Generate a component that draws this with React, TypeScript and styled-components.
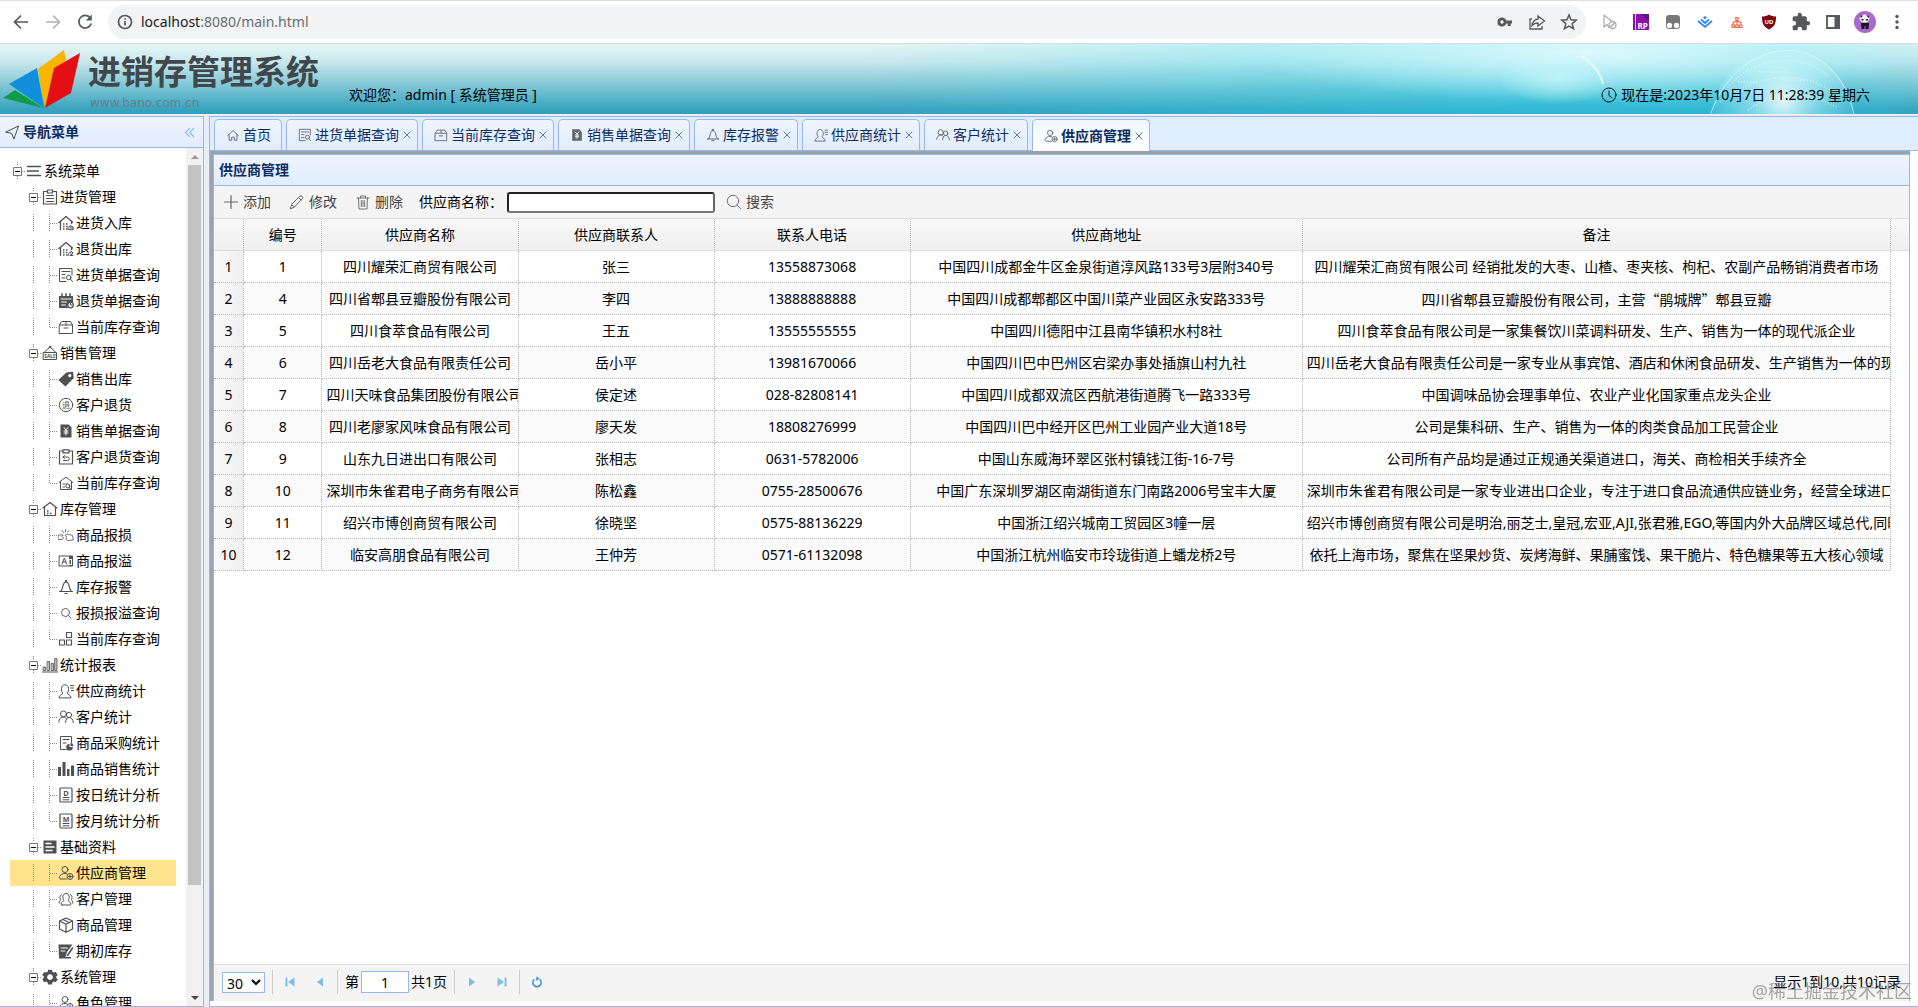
import React from 'react';
import styled, { createGlobalStyle, css } from 'styled-components';

const BLUE = '#95b8e7';
const INK = '#0e2d5f';
const FONT = '"Noto Sans", "Noto Sans CJK SC", sans-serif';

const GlobalStyle = createGlobalStyle`
  *, *::before, *::after { box-sizing: border-box; }
  body { margin: 0; background: #fff; color: #000; font: 14px/20px ${FONT}; overflow: hidden; }
  button, input, select { font: inherit; color: inherit; margin: 0; }
  button { border: 0; padding: 0; background: none; cursor: pointer; }
  svg { display: block; flex: none; }
`;

/* ---------- icons ---------- */

const Glyph = styled.svg.attrs({ viewBox: '0 0 16 16' })<{ $size?: number }>`
  width: ${(p) => p.$size ?? 16}px;
  height: ${(p) => p.$size ?? 16}px;
  fill: none;
  stroke: currentColor;
  stroke-width: 1;
  stroke-linecap: round;
  stroke-linejoin: round;
`;

const solid = { fill: 'currentColor', stroke: 'none' };
const mini = { fill: 'currentColor', stroke: 'none', fontFamily: 'Noto Sans', fontWeight: 700, textAnchor: 'middle' as const };

const icons: Record<string, React.ReactNode> = {
  menu: <path strokeWidth="1.3" d="M1.5 3.5h13M1.5 8h11M1.5 12.5h13" />,
  clipboard: (
    <>
      <path strokeWidth="1.2" d="M4.5 2.5h-3v12.500h13V2.500h-3M5.500 1h5v3h-5z" />
      <path d="M4.500 6.500h7M4.500 9.500h7M4.500 12.500h7" />
    </>
  ),
  houseIn: (
    <>
      <path strokeWidth="1.3" d="M1 7.500 8 1.500l6.500 5.500M2.500 6.500v8M13.500 6.500v2" />
      <path strokeWidth="1.6" strokeDasharray="1.500 1.500" strokeLinecap="butt" d="M5 9h6M5 11.500h4.500M5 14h4.500" />
      <path d="M10 14v-1.500l2-2 3 1.500v2.500zM12 11.500v1.500h3" />
    </>
  ),
  houseOut: (
    <>
      <path strokeWidth="1.3" d="M1 7.500 8 1.500l6.500 5.500M2.500 6.500v8M13.500 6.500v2" />
      <path strokeWidth="1.6" strokeDasharray="1.500 1.500" strokeLinecap="butt" d="M5 9h4.500M5 11.500h4.500M5 14h4.500" />
      <path d="M10 14.500c0-2 1-3 3-3v-1.500l2 2-2 2v-1M12 14.500h3" />
    </>
  ),
  docSearch: (
    <>
      <path d="M14 8V1.500H1.500v13H8M4 4.500h8M4 7.500h3M4 11h3" />
      <circle cx="10.800" cy="10.500" r="2.300" />
      <path d="m12.500 12.300 2 2.200" />
    </>
  ),
  calendar: (
    <>
      <path {...solid} d="M1 3h14v6.500a4 4 0 0 0-5 5.500H1z" />
      <path strokeWidth="1.500" d="M4 .800v3M8 .800v3M12 .800v3" />
      <path stroke="#fff" d="M3 6h10M3.500 9h5M3.500 12h4" />
      <circle cx="12.500" cy="12" r="2.800" strokeWidth="1.300" />
      <path d="M12.500 10.500V12h1.300" />
    </>
  ),
  box: (
    <>
      <path d="M1.500 6 3.500 2.500h9L14.500 6v8.500h-13zM1.500 6h13M8 2.500V6M6 9h4" />
    </>
  ),
  sale: (
    <>
      <path d="M1.500 7.500h13v7h-13zM2 7.500 8 2l6 5.500" />
      <circle cx="8" cy="2" r=".9" />
      <text {...mini} x="8" y="13" fontSize="4.800">SALE</text>
    </>
  ),
  tag: <path {...solid} fillRule="evenodd" d="M8.500 1.500 15 .800l.800 6.200L7.500 15.500.300 9zM11.800 3a1.600 1.600 0 1 0 .010 0z" />,
  returned: (
    <>
      <circle cx="8" cy="8" r="6.700" />
      <text {...mini} x="8" y="11" fontSize="8" fontFamily="Noto Sans CJK SC" fontWeight={400}>退</text>
    </>
  ),
  bill: (
    <>
      <path {...solid} d="M2.500 1.500h8l3 3v10h-11z" />
      <path stroke="#fff" d="m6 4.500 2 2.500 2-2.500M8 7v5M6 8h4M6 10h4" />
    </>
  ),
  clipReturn: (
    <>
      <path strokeWidth="1.200" d="M4.500 2h-3v13h13V2h-3M5 .800h6v3H5z" />
      <path d="M6.500 6.500 5 8l1.500 1.500M5 8h4.500a1.700 1.700 0 0 1 0 3.500H5.500" />
    </>
  ),
  houseStock: (
    <>
      <path d="M1 7.500 8 2l7 5.500M2.500 6.500v8h11v-8M5 9h1.500M5 12h1.500M8 9h1" />
      <circle cx="9.800" cy="11" r="2" />
      <path d="m11.200 12.500 1.300 1.500" />
    </>
  ),
  warehouse: (
    <>
      <path strokeWidth="1.200" d="M1 7 8 1.500 15 7M2.500 6v8.500h11V6" />
      <path strokeWidth="1.500" strokeDasharray="1.500 1.500" strokeLinecap="butt" d="M5 10h3M5 12.500h6" />
    </>
  ),
  broken: <path strokeWidth=".8" d="M.500 8h4.500l-1 1.500 1.500 1.500-1 1.500H.500zM7.500 8l2-1 5 1.500.800 4.500-6 .500-1.300-1.500.500-1.500zM4 3.500l1.500 2M7.500 2.500v2.500M11 3.500 9.500 5" />,
  letterBox: (
    <>
      <path d="M1.500 3h13v10h-13z" />
      <path {...solid} d="M11 3h3.500v3H11zM11.500 7H13v4h-1.500zM11 12h3.500v1H11z" />
      <path d="m4 11 2.300-6 2.300 6M5 9h2.800" />
    </>
  ),
  bell: <path strokeWidth="1.100" d="M1.500 12.500h13M2.500 12.500C4.500 11 4.500 8.500 5 6.500 5.500 4.500 6.500 3 8 3s2.500 1.500 3 3.500c.5 2 .5 4.500 2.500 6M7.500 1.500h1V3h-1zM6.800 14.500h2.400" />,
  zoom: (
    <>
      <circle cx="7.500" cy="7.500" r="4" strokeWidth=".9" />
      <path strokeWidth=".9" d="m10.500 10.500 2.500 2.500" />
    </>
  ),
  blocks: <path strokeWidth="1.100" d="M8.500 1.500h5v5h-5zM1.500 9h5v5h-5zM8.500 9h5v5h-5z" />,
  report: (
    <>
      <path strokeWidth="1.200" d="M.500 15h15" />
      <path strokeWidth=".8" d="M1.500 10h2v3.500h-2zM5.500 4.500h2v9h-2zM9.500 6.500h2v7h-2zM13 1.500h2v12h-2z" fill="#bbb" />
    </>
  ),
  supplier: <path d="M1 14.500c0-3 3.500-2.500 3.800-4.500C3.500 9 3.500 7.500 3.500 5.500c0-5 7-5 7 0 0 2 0 3.500-1.200 4.500.2 2 3.700 1.500 3.700 4.500zM12.500 2.500h3M12.500 5h3M13.500 7.500h2" />,
  people: (
    <>
      <circle cx="5.500" cy="5" r="3" />
      <circle cx="11" cy="6" r="2.600" />
      <path d="M.800 13c.2-3 2-5 4.700-5 1.500 0 2.500.8 3 2M7.500 13.500c.2-3 1.500-5 3.800-5s3.700 2 4 5" />
    </>
  ),
  docPie: (
    <>
      <path d="M13.500 7.500V1.500h-11v13H8M5 4.500h6M5 8h3" />
      <path {...solid} d="M11.500 9v3h3.300a3.300 3.300 0 1 1-3.300-3zM12.500 8a3 3 0 0 1 2.800 3h-2.800z" />
    </>
  ),
  bars: <path {...solid} d="M0 6h3v9H0zM4.500 1h3v14h-3zM9 8h2.500v7H9zM13 4.500h3V15h-3z" />,
  dayDoc: (
    <>
      <rect x="2" y="1" width="12" height="14" rx="1" strokeWidth="1.200" />
      <path d="M5 10.500h6M5 12.800h6" />
      <text {...mini} x="8" y="8.500" fontSize="7.500">D</text>
    </>
  ),
  monthDoc: (
    <>
      <rect x="2" y="1" width="12" height="14" rx="1" strokeWidth="1.200" />
      <path d="M5 10.500h6M5 12.800h6" />
      <text {...mini} x="8" y="8.500" fontSize="7">M</text>
    </>
  ),
  data: (
    <>
      <path {...solid} d="M1.500 1.500h13v13h-13z" />
      <path stroke="#fff" strokeWidth="1.500" d="M4 4.500h5M4 8h8M4 11.500h6" />
    </>
  ),
  userPin: (
    <>
      <circle cx="7" cy="4.500" r="3" />
      <path d="M8.500 14H3c-2 0-2-1.500-1.500-2.500C2.500 9.500 4.500 8.500 7 8.500c.8 0 1.500.1 2 .4" />
      <circle cx="12" cy="11.500" r="3" />
      <path d="M10.500 11.500h3M12 10v3" />
    </>
  ),
  group: (
    <>
      <path d="M4 14h8c1.500 0 1-3-2-4.500 2-2.500 1.500-7-2-7S4 7 6 9.500C3 11 2.500 14 4 14zM3.700 3.500C1.500 4 1.500 7.500 2.800 8.800 1 10 .500 12 1.500 12.500M12.300 3.500c2.200.5 2.200 4 .9 5.300 1.800 1.200 2.300 3.200 1.300 3.700" />
    </>
  ),
  cube: <path strokeWidth="1.200" d="M8 1 14.500 4v8L8 15.200 1.500 12V4zM1.500 4 8 7.200 14.500 4M8 7.200v8M5 2.500 11 5.500" />,
  note: (
    <>
      <path {...solid} d="M.500 1.500h14L9 9l-1.500 5H13v1.500H1z" />
      <path stroke="#fff" d="M3 5h6.500M3 8h4" />
      <path strokeWidth="1.600" d="m14.500 5-5 7.500" />
    </>
  ),
  gear: (
    <path {...solid} fillRule="evenodd" d="M6.200.800h3.600l.6 2 1.400.8 2-.6 1.900 3-1.500 1.400v1.400l1.500 1.400-1.900 3-2-.6-1.400.8-.6 2H6.200l-.6-2-1.400-.8-2 .6-1.900-3 1.500-1.400V7.400L.300 6l1.900-3 2 .6 1.400-.8zM8 5.200a2.900 2.900 0 1 0 .010 0z" />
  ),
  home: <path d="M2 8.500 8 3l6 5.500M3.500 7.500v6.500h3v-3.500h3V14h3V7.500" />,
  send: <path d="M1 7.500 14.500 1 9.500 15 7.200 9.200z" />,
  clock: (
    <>
      <circle cx="8" cy="8" r="7" strokeWidth=".9" />
      <path strokeWidth=".9" d="M8 4v4.500l2.500 2" />
    </>
  ),
  plus: <path strokeWidth="1.200" d="M8 1.500v13M1.500 8h13" />,
  pencil: <path d="m1.500 14.500 1-4 8.500-8.500c1.200-1 3.500 1.200 2.500 2.500L5.500 13zM9.500 3.500 12 6M2.500 10.500l3 2.500" />,
  trash: <path strokeWidth=".9" d="M2 4h12M5.500 4V2h5v2M3.500 4l.5 11h8l.5-11M6.300 6.500v6M8 6.500v6M9.700 6.500v6" />,
  search: (
    <>
      <circle cx="7" cy="7" r="5.700" strokeWidth=".9" />
      <path strokeWidth=".9" d="m11.200 11.200 3.500 3.500" />
    </>
  ),
  first: <path {...solid} d="M2 2h2.500v12H2zM14 2v12L5.500 8z" />,
  prev: <path {...solid} d="M12 2v12L4 8z" />,
  next: <path {...solid} d="M4 2v12l8-6z" />,
  last: <path {...solid} d="M11.500 2H14v12h-2.500zM2 2v12l8.500-6z" />,
  refresh: (
    <>
      <path strokeWidth="2" strokeLinecap="butt" d="M11.500 4.500A5.500 5.500 0 1 1 4.500 4.500" />
      <path {...solid} d="M7 .500v6L11.500 3.300z" />
    </>
  ),
  collapse: <path strokeWidth="1.500" d="M8 2 2 8l6 6M14 2 8 8l6 6" />,
};

const Icon = ({ name, size }: { name: string; size?: number }) => (
  <Glyph $size={size} aria-hidden="true">{icons[name]}</Glyph>
);

/* ---------- browser bar ---------- */

const Page = styled.div`
  height: 100vh;
  display: grid;
  grid-template-rows: 44px 70px minmax(0, 1fr);
`;

const BrowserBar = styled.div`
  display: flex;
  align-items: center;
  padding: 0 5px;
  border-top: 1px solid #dcdee0;
  border-bottom: 1px solid #d5dcdf;
  color: #55585c;
`;

const ChromeButton = styled.button<{ $dim?: boolean }>`
  width: 32px;
  height: 32px;
  display: grid;
  place-items: center;
  opacity: ${(p) => (p.$dim ? 0.45 : 1)};
`;

const Address = styled.div`
  flex: 1;
  height: 34px;
  margin: 0 7px;
  padding: 0 1px 0 7px;
  display: flex;
  align-items: center;
  border-radius: 17px;
  background: #f1f3f4;
`;

const Url = styled.span`
  flex: 1;
  padding-left: 6px;
  font-size: 14px;
  color: #6a6d70;
  b { font-weight: 400; color: #202124; }
`;

const ChromeSvg = styled.svg`
  width: 20px;
  height: 20px;
  fill: none;
  stroke: currentColor;
  stroke-width: 1.7;
`;

const Avatar = styled.svg`
  width: 22px;
  height: 22px;
`;

function Browser() {
  return (
    <BrowserBar>
      <ChromeButton aria-label="back"><ChromeSvg viewBox="0 0 20 20"><path d="M17 10H4M10 3.500 3.500 10l6.500 6.500" /></ChromeSvg></ChromeButton>
      <ChromeButton aria-label="forward" $dim><ChromeSvg viewBox="0 0 20 20"><path d="M3 10h13M10 3.500l6.500 6.500-6.500 6.500" /></ChromeSvg></ChromeButton>
      <ChromeButton aria-label="reload">
        <ChromeSvg viewBox="0 0 20 20"><path d="M15.300 6A6.300 6.300 0 1 0 16.200 11.500" /><path d="M16.800 2.500v6h-6z" fill="currentColor" stroke="none" /></ChromeSvg>
      </ChromeButton>
      <Address>
        <ChromeSvg viewBox="0 0 20 20"><circle cx="10" cy="10" r="6.500" /><path d="M10 9v4.500M10 6.200v1.600" /></ChromeSvg>
        <Url><b>localhost</b>:8080/main.html</Url>
        <ChromeButton aria-label="passwords">
          <ChromeSvg viewBox="0 0 20 20"><path fill="currentColor" stroke="none" fillRule="evenodd" d="M7 5.500a4.500 4.500 0 0 1 4.200 3H17v3h-1.300V14h-3v-2.500h-1.500A4.500 4.500 0 1 1 7 5.500zM7 8.300a1.700 1.700 0 1 0 .010 0z" /></ChromeSvg>
        </ChromeButton>
        <ChromeButton aria-label="share">
          <ChromeSvg viewBox="0 0 20 20"><path strokeWidth="1.300" d="M5 7H3v10h12v-3M11 4l6.500 5-6.500 5v-3c-3 0-4.500.8-6 2.500.5-3.500 2.500-6 6-6.500z" /></ChromeSvg>
        </ChromeButton>
        <ChromeButton aria-label="bookmark">
          <ChromeSvg viewBox="0 0 20 20"><path strokeWidth="1.500" d="m10 3 2 4.800 5.200.4-4 3.400 1.300 5.100L10 14l-4.500 2.700 1.300-5.100-4-3.400L8 7.800z" /></ChromeSvg>
        </ChromeButton>
      </Address>
      <ChromeButton aria-label="pointer">
        <ChromeSvg viewBox="0 0 20 20"><path stroke="#a9a9a9" strokeWidth="1.200" d="M5 3v12l3-2.500 2 3.500M5 3l7.500 6" /><circle cx="13.500" cy="13" r="3.500" stroke="#a9a9a9" strokeWidth="1.300" /><path stroke="#a9a9a9" d="m11.500 15 4-4" /></ChromeSvg>
      </ChromeButton>
      <ChromeButton aria-label="RP">
        <ChromeSvg viewBox="0 0 20 20"><path fill="#8a12a8" stroke="none" d="M2 2h16v16H2z" /><path fill="#5b1583" stroke="none" d="M10 2h8v7z" /><path stroke="#fff" strokeWidth=".8" d="M4.500 2v16" /><text x="11.500" y="16.500" fontSize="8" fontWeight="700" fill="#fff" stroke="none" textAnchor="middle" fontFamily="Noto Sans">RP</text></ChromeSvg>
      </ChromeButton>
      <ChromeButton aria-label="panda">
        <ChromeSvg viewBox="0 0 20 20"><rect x="3" y="3" width="14" height="14" rx="3" fill="#777" stroke="none" /><circle cx="6.500" cy="13.500" r="2.700" fill="#fff" stroke="none" /><circle cx="13.500" cy="13.500" r="2.700" fill="#fff" stroke="none" /></ChromeSvg>
      </ChromeButton>
      <ChromeButton aria-label="juejin">
        <ChromeSvg viewBox="0 0 20 20"><path stroke="#2a83f6" d="m3 9 7 6 7-6M6 7.500l4 3.500 4-3.500" /><path fill="#2a83f6" stroke="none" d="m10 4 2 1.700-2 1.600-2-1.600z" /></ChromeSvg>
      </ChromeButton>
      <ChromeButton aria-label="sitemap">
        <ChromeSvg viewBox="0 0 20 20"><path stroke="#ee6a4a" strokeWidth="1.200" d="M8.800 5.500h2.400V8H8.800zM10 8v5M6 13v-2.500l4-1.500 4 1.500V13M5 13h2.500v2.500H5zM8.800 13h2.400v2.500H8.800zM12.500 13H15v2.500h-2.500z" /></ChromeSvg>
      </ChromeButton>
      <ChromeButton aria-label="ublock">
        <ChromeSvg viewBox="0 0 20 20"><path fill="#800010" stroke="none" d="M10 2.500c2 1.500 4.500 2 7 2 0 6-1 10-7 13-6-3-7-7-7-13 2.500 0 5-.5 7-2z" /><text x="10" y="12" fontSize="6" fontWeight="700" fill="#fff" stroke="none" textAnchor="middle" fontFamily="Noto Sans">UD</text></ChromeSvg>
      </ChromeButton>
      <ChromeButton aria-label="extensions">
        <ChromeSvg viewBox="0 0 24 24"><path fill="currentColor" stroke="none" d="M20.500 11H19V7c0-1.100-.9-2-2-2h-4V3.500a2.500 2.500 0 0 0-5 0V5H4c-1.100 0-2 .9-2 2v3.800h1.500a2.700 2.700 0 0 1 0 5.400H2V20c0 1.100.9 2 2 2h3.800v-1.500a2.700 2.700 0 0 1 5.400 0V22H17c1.100 0 2-.9 2-2v-4h1.500a2.500 2.500 0 0 0 0-5z" /></ChromeSvg>
      </ChromeButton>
      <ChromeButton aria-label="side panel">
        <ChromeSvg viewBox="0 0 20 20"><path strokeWidth="1.800" d="M4 4h12v12H4z" /><path fill="currentColor" stroke="none" d="M11.500 4H17v13h-5.500z" /></ChromeSvg>
      </ChromeButton>
      <ChromeButton aria-label="profile">
        <Avatar viewBox="0 0 22 22"><circle cx="11" cy="11" r="11" fill="#ab68cf" /><ellipse cx="10.500" cy="7.500" rx="5" ry="4" fill="#f4f0f6" /><path fill="#1c1820" d="M6 4.500h3L7 7zM12 4l3 1-.5 2zM7.500 8h2v1.500h-2zM12 8h2v1.500h-2zM7 12h8l-.5 6h-3v-3h-1v3H7.500z" /></Avatar>
      </ChromeButton>
      <ChromeButton aria-label="more">
        <ChromeSvg viewBox="0 0 20 20"><g fill="currentColor" stroke="none"><circle cx="10" cy="4.500" r="1.700" /><circle cx="10" cy="10" r="1.700" /><circle cx="10" cy="15.500" r="1.700" /></g></ChromeSvg>
      </ChromeButton>
    </BrowserBar>
  );
}

/* ---------- banner ---------- */

const Banner = styled.header`
  position: relative;
  display: flex;
  align-items: flex-start;
  overflow: hidden;
  background:
    radial-gradient(ellipse 340px 50px at calc(100% - 330px) 8px, rgba(240, 253, 255, 0.8), transparent),
    linear-gradient(90deg, transparent 45%, rgba(40, 220, 245, 0.4) 80%, rgba(40, 220, 245, 0.35) 93%, rgba(40, 200, 225, 0.1)),
    linear-gradient(#e6f5f6 0, #c9e8ec 25%, #7fc6d4 60%, #3ba5c0 92%, #349fbb);
`;

const GlobeArt = styled.svg`
  position: absolute;
  right: 0;
  top: 0;
  width: 480px;
  height: 70px;
`;

const Logo = styled.svg`
  width: 88px;
  height: 70px;
`;

const Brand = styled.div`
  padding-top: 6px;
  width: 261px;
`;

const BrandName = styled.h1`
  margin: 0 0 4px;
  font: 700 33px/40px "Noto Sans CJK SC", sans-serif;
  color: #40484d;
  white-space: nowrap;
`;

const BrandSite = styled.div`
  padding-left: 2px;
  font: 12px/18px "DejaVu Sans", sans-serif;
  color: #667f88;
`;

const Welcome = styled.div`
  flex: 1;
  padding-top: 41px;
`;

const Clock = styled.div`
  position: relative;
  display: flex;
  align-items: center;
  gap: 4px;
  padding: 41px 48px 0 0;
`;

/* ---------- work area ---------- */

const Workspace = styled.div`
  display: grid;
  grid-template-columns: 204px minmax(0, 1fr);
  column-gap: 5px;
  padding-top: 2px;
  background: #e6eef8;
  min-height: 0;
`;

const Sidebar = styled.nav`
  display: grid;
  grid-template-rows: 31px minmax(0, 1fr);
  border: 1px solid ${BLUE};
  border-left: 0;
  background: #fff;
  min-height: 0;
`;

const titleBar = css`
  display: flex;
  align-items: center;
  border-bottom: 1px solid ${BLUE};
  background: linear-gradient(#eff5ff, #e0ecff);
  color: ${INK};
  font-size: 14px;
  font-weight: 700;
`;

const NavTitle = styled.div`
  ${titleBar}
  padding: 0 8px 0 5px;
  gap: 3px;
  svg { color: #444; }
`;

const NavLabel = styled.span`
  flex: 1;
`;

const Fold = styled.button`
  svg { color: #6cb2ee; }
`;

const NavBody = styled.div`
  display: grid;
  grid-template-columns: minmax(0, 1fr) 17px;
  min-height: 0;
`;

const Tree = styled.ul`
  list-style: none;
  margin: 0;
  padding: 10px;
  overflow: hidden;
`;

const TreeRow = styled.li<{ $active: boolean }>`
  display: flex;
  align-items: center;
  height: 26px;
  white-space: nowrap;
  background: ${(p) => (p.$active ? '#ffe48d' : 'transparent')};
  svg { color: #505050; }
`;

const TreeLink = styled.a`
  display: flex;
  align-items: center;
  gap: 2px;
  color: #000;
  text-decoration: none;
`;

const dotsY = 'repeating-linear-gradient(#8a8a8a 0 1px, transparent 1px 2px)';
const dotsX = 'repeating-linear-gradient(90deg, #8a8a8a 0 1px, transparent 1px 2px)';

const Blank = styled.span`
  flex: none;
  width: 16px;
  height: 18px;
`;

const Rail = styled(Blank)`
  background: ${dotsY} 7px 0 / 1px 18px no-repeat;
`;

const Join = styled(Blank)<{ $last: boolean }>`
  background:
    ${dotsY} 7px 0 / 1px ${(p) => (p.$last ? 9 : 18)}px no-repeat,
    ${dotsX} 8px 9px / 8px 1px no-repeat;
`;

const Toggle = styled.button`
  flex: none;
  width: 16px;
  height: 18px;
  display: grid;
  place-items: center;
  background:
    ${dotsY} 7px 0 / 1px 4px no-repeat,
    ${dotsY} 7px 14px / 1px 4px no-repeat,
    ${dotsX} 12px 9px / 4px 1px no-repeat;
`;

const Minus = styled.svg`
  width: 9px;
  height: 9px;
  margin-right: 1px;
`;

const Track = styled.div`
  display: grid;
  grid-template-rows: 17px 90fr 13fr 17px;
  justify-items: center;
  align-items: center;
  background: #f1f1f1;
`;

const Thumb = styled.div`
  width: 13px;
  align-self: stretch;
  grid-row: 2;
  background: #c1c3c1;
`;

const Arrow = styled.svg`
  width: 8px;
  height: 4px;
  &:last-child { grid-row: 4; }
`;

const Main = styled.main`
  display: grid;
  grid-template-rows: 34px minmax(0, 1fr);
  border: 1px solid ${BLUE};
  border-right: 0;
  background: #fff;
  min-height: 0;
`;

const TabStrip = styled.ul`
  list-style: none;
  margin: 0;
  padding: 2px 4px 0;
  display: flex;
  gap: 4px;
  background: #e0ecff;
  border-bottom: 1px solid ${BLUE};
`;

const Tab = styled.li<{ $active: boolean }>`
  display: flex;
  align-items: center;
  height: ${(p) => (p.$active ? 32 : 31)}px;
  padding-left: 11px;
  border: 1px solid ${BLUE};
  border-bottom: 0;
  border-radius: 5px 5px 0 0;
  color: ${INK};
  font-weight: ${(p) => (p.$active ? 700 : 400)};
  background: ${(p) => (p.$active ? 'linear-gradient(#eff5ff, #fff)' : 'linear-gradient(#eff5ff, #e0ecff)')};
  white-space: nowrap;
  svg { color: #60646c; }
`;

const TabButton = styled.button<{ $closable: boolean }>`
  display: flex;
  align-items: center;
  gap: 3px;
  padding-right: ${(p) => (p.$closable ? 0 : 10)}px;
`;

const Close = styled.button`
  width: 18px;
  height: 18px;
  padding-right: 2px;
  display: grid;
  place-items: center;
  svg { color: #5f78ae; }
`;

const Panel = styled.section`
  display: grid;
  grid-template-rows: 32px 33px minmax(0, 1fr) 37px;
  margin: 0 8px 5px 0;
  border: 3px solid #9ba1ad;
  border-right: 0;
  border-bottom: 0;
  box-shadow: inset 1px 1px 0 ${BLUE}, inset -1px 0 0 ${BLUE};
  padding: 0 1px;
  min-height: 0;
`;

const PanelTitle = styled.h2`
  ${titleBar}
  margin: 0;
  padding: 0 5px;
  border-top: 1px solid ${BLUE};
`;

const Toolbar = styled.form`
  display: flex;
  align-items: center;
  gap: 16px;
  padding: 0 9px;
  background: #f4f4f4;
  border-bottom: 1px solid #ddd;
`;

const Tools = styled.div`
  display: flex;
  gap: 18px;
`;

const Tool = styled.button`
  display: flex;
  align-items: center;
  gap: 4px;
  color: #444;
  svg { color: #666; }
`;

const SearchField = styled.div`
  display: flex;
  align-items: center;
  gap: 11px;
`;

const SearchLabel = styled.label`
  display: flex;
  align-items: center;
  gap: 4px;
`;

const SearchInput = styled.input`
  width: 208px;
  height: 21px;
  padding: 0 4px;
  border: 2px solid #222;
  border-right-color: #666;
  border-bottom-color: #777;
  border-radius: 3px;
  background: #fff;
  outline: none;
`;

const Grid = styled.table`
  display: block;
  background: #fff;
  overflow: hidden;
`;

const Head = styled.thead`
  display: block;
  background: linear-gradient(#f9f9f9, #efefef);
  border-bottom: 1px solid #ddd;
`;

const Body = styled.tbody`
  display: block;
`;

const Line = styled.tr`
  display: grid;
  grid-template-columns: 30px minmax(0, 2fr) repeat(3, minmax(0, 5fr)) minmax(0, 10fr) minmax(0, 15fr);
  margin-right: 18px;
  ${Body} &:nth-child(even) { background: #fafafa; }
`;

const cell = css`
  height: 32px;
  padding: 0 4px;
  border-right: 1px dotted #bbb;
  border-bottom: 1px dotted #bbb;
  font-weight: 400;
  line-height: 32px;
  text-align: center;
  white-space: nowrap;
  overflow: hidden;
`;

const HeadCell = styled.th`
  ${cell}
  height: 31px;
  border-bottom: 0;
`;

const Cell = styled.td`
  ${cell}
`;

const NumberCell = styled.th`
  ${cell}
  padding: 0;
  background: linear-gradient(90deg, #f9f9f9, #efefef);
`;

const Quote = styled.span`
  font-family: "Noto Sans CJK SC", sans-serif;
`;

const Pager = styled.div`
  display: flex;
  align-items: center;
  padding: 0 8px 2px 8px;
  background: #f4f4f4;
  border-top: 1px solid #ddd;
`;

const PageSize = styled.select`
  width: 43px;
  height: 21px;
  margin-right: 5px;
  border: 1px solid ${BLUE};
  background: #fff;
`;

const Divider = styled.span`
  width: 1px;
  height: 24px;
  margin: 0 2px;
  background: #ccc;
`;

const PageButton = styled.button<{ $strong?: boolean }>`
  width: 26px;
  height: 26px;
  margin: 0 2px;
  display: grid;
  place-items: center;
  svg { color: ${(p) => (p.$strong ? '#3a94d2' : '#7fbde8')}; }
`;

const PageJump = styled.label`
  display: flex;
  align-items: center;
  gap: 2px;
  padding: 0 5px;
`;

const PageInput = styled.input`
  width: 48px;
  height: 22px;
  border: 1px solid ${BLUE};
  background: #fff;
  text-align: center;
`;

const Summary = styled.span`
  margin-left: auto;
`;

const Watermark = styled.div`
  position: fixed;
  right: 6px;
  bottom: 3px;
  font-size: 18px;
  line-height: 26px;
  color: rgba(110, 110, 110, 0.6);
  pointer-events: none;
`;

type Node = [level: number, icon: string, text: string, last?: boolean];

const nodes: Node[] = [
  [0, 'menu', '系统菜单'],
  [1, 'clipboard', '进货管理'],
  [2, 'houseIn', '进货入库'],
  [2, 'houseOut', '退货出库'],
  [2, 'docSearch', '进货单据查询'],
  [2, 'calendar', '退货单据查询'],
  [2, 'box', '当前库存查询', true],
  [1, 'sale', '销售管理'],
  [2, 'tag', '销售出库'],
  [2, 'returned', '客户退货'],
  [2, 'bill', '销售单据查询'],
  [2, 'clipReturn', '客户退货查询'],
  [2, 'houseStock', '当前库存查询', true],
  [1, 'warehouse', '库存管理'],
  [2, 'broken', '商品报损'],
  [2, 'letterBox', '商品报溢'],
  [2, 'bell', '库存报警'],
  [2, 'zoom', '报损报溢查询'],
  [2, 'blocks', '当前库存查询', true],
  [1, 'report', '统计报表'],
  [2, 'supplier', '供应商统计'],
  [2, 'people', '客户统计'],
  [2, 'docPie', '商品采购统计'],
  [2, 'bars', '商品销售统计'],
  [2, 'dayDoc', '按日统计分析'],
  [2, 'monthDoc', '按月统计分析', true],
  [1, 'data', '基础资料'],
  [2, 'userPin', '供应商管理'],
  [2, 'group', '客户管理'],
  [2, 'cube', '商品管理'],
  [2, 'note', '期初库存', true],
  [1, 'gear', '系统管理'],
  [2, 'userPin', '角色管理'],
];

const tabs: [string, string][] = [
  ['home', '首页'],
  ['docSearch', '进货单据查询'],
  ['box', '当前库存查询'],
  ['bill', '销售单据查询'],
  ['bell', '库存报警'],
  ['supplier', '供应商统计'],
  ['people', '客户统计'],
  ['userPin', '供应商管理'],
];

const columns = ['编号', '供应商名称', '供应商联系人', '联系人电话', '供应商地址', '备注'];

const rows: string[][] = [
  ['1', '四川耀荣汇商贸有限公司', '张三', '13558873068', '中国四川成都金牛区金泉街道淳风路133号3层附340号', '四川耀荣汇商贸有限公司 经销批发的大枣、山楂、枣夹核、枸杞、农副产品畅销消费者市场'],
  ['4', '四川省郫县豆瓣股份有限公司', '李四', '13888888888', '中国四川成都郫都区中国川菜产业园区永安路333号', '四川省郫县豆瓣股份有限公司，主营“鹃城牌”郫县豆瓣'],
  ['5', '四川食萃食品有限公司', '王五', '13555555555', '中国四川德阳中江县南华镇积水村8社', '四川食萃食品有限公司是一家集餐饮川菜调料研发、生产、销售为一体的现代派企业'],
  ['6', '四川岳老大食品有限责任公司', '岳小平', '13981670066', '中国四川巴中巴州区宕梁办事处插旗山村九社', '四川岳老大食品有限责任公司是一家专业从事宾馆、酒店和休闲食品研发、生产销售为一体的现'],
  ['7', '四川天味食品集团股份有限公司', '侯定述', '028-82808141', '中国四川成都双流区西航港街道腾飞一路333号', '中国调味品协会理事单位、农业产业化国家重点龙头企业'],
  ['8', '四川老廖家风味食品有限公司', '廖天发', '18808276999', '中国四川巴中经开区巴州工业园产业大道18号', '公司是集科研、生产、销售为一体的肉类食品加工民营企业'],
  ['9', '山东九日进出口有限公司', '张相志', '0631-5782006', '中国山东威海环翠区张村镇钱江街-16-7号', '公司所有产品均是通过正规通关渠道进口，海关、商检相关手续齐全'],
  ['10', '深圳市朱雀君电子商务有限公司', '陈松鑫', '0755-28500676', '中国广东深圳罗湖区南湖街道东门南路2006号宝丰大厦', '深圳市朱雀君有限公司是一家专业进出口企业，专注于进口食品流通供应链业务，经营全球进口'],
  ['11', '绍兴市博创商贸有限公司', '徐晓坚', '0575-88136229', '中国浙江绍兴城南工贸园区3幢一层', '绍兴市博创商贸有限公司是明治,丽芝士,皇冠,宏亚,AJI,张君雅,EGO,等国内外大品牌区域总代,同时'],
  ['12', '临安高朋食品有限公司', '王仲芳', '0571-61132098', '中国浙江杭州临安市玲珑街道上蟠龙桥2号', '依托上海市场，聚焦在坚果炒货、炭烤海鲜、果脯蜜饯、果干脆片、特色糖果等五大核心领域'],
];

/* Curly quotes take the full-width form inside Chinese text. */
const withQuotes = (text: string) =>
  text.split(/([“”])/).map((part, i) => (i % 2 ? <Quote key={i}>{part}</Quote> : part));

function Header() {
  return (
    <Banner>
      <GlobeArt viewBox="0 0 480 70" aria-hidden="true">
        <defs>
          <radialGradient id="glow" cx="50%" cy="35%" r="50%">
            <stop offset="0" stopColor="#fff" stopOpacity=".85" />
            <stop offset=".45" stopColor="#d8fbff" stopOpacity=".45" />
            <stop offset="1" stopColor="#b4f1fa" stopOpacity=".12" />
          </radialGradient>
          <radialGradient id="haze">
            <stop offset="0" stopColor="#c8f7fc" stopOpacity=".7" />
            <stop offset="1" stopColor="#c8f7fc" stopOpacity="0" />
          </radialGradient>
        </defs>
        <ellipse cx="120" cy="34" rx="60" ry="26" fill="url(#haze)" />
        <circle cx="345" cy="78" r="72" fill="url(#glow)" />
        <g fill="none" stroke="#e8feff">
          <path strokeOpacity=".6" d="M272 72C290 15 350-15 392 24 404 36 411 50 416 70" />
          <path strokeOpacity=".6" strokeDasharray="1 2" strokeWidth="1.500" d="M288 46C310 15 360 5 390 32M282 58C320 28 370 24 402 54M310 66C340 46 370 46 400 64M300 38h20M320 28h30M344 36h24M310 48h54" />
          <path strokeOpacity=".8" strokeWidth="2" d="M143 12C154 18 162 28 165 40" />
        </g>
      </GlobeArt>
      <Logo viewBox="0 0 88 70" aria-hidden="true">
        <path fill="#0f9d48" d="M3 54 15 46 43 64z" />
        <path fill="#118fdc" d="M9 40 37 24 44 64z" />
        <path fill="#f7b500" d="M38 25 64 6 66 16 53 32 45 64 41 45z" />
        <path fill="#e40f14" d="M54 24 80 9 71 49 45 64z" />
      </Logo>
      <Brand>
        <BrandName>进销存管理系统</BrandName>
        <BrandSite>www.bano.com.cn</BrandSite>
      </Brand>
      <Welcome>欢迎您：admin [ 系统管理员 ]</Welcome>
      <Clock><Icon name="clock" />现在是:2023年10月7日 11:28:39 星期六</Clock>
    </Banner>
  );
}

function SystemMenu() {
  return (
    <Sidebar>
      <NavTitle>
        <Icon name="send" size={15} />
        <NavLabel>导航菜单</NavLabel>
        <Fold aria-label="collapse"><Icon name="collapse" size={11} /></Fold>
      </NavTitle>
      <NavBody>
        <Tree>
          {nodes.map(([level, icon, text, last], i) => (
            <TreeRow key={i} $active={text === '供应商管理'}>
              {level > 0 && <Blank />}
              {level === 2 && <><Rail /><Join $last={!!last} /></>}
              {level < 2 && (
                <Toggle aria-label={text}>
                  <Minus viewBox="0 0 9 9"><path fill="#fff" stroke="#777" d="M.500.500h8v8h-8z" /><path stroke="#000" d="M2 4.500h5" /></Minus>
                </Toggle>
              )}
              <TreeLink href="#"><Icon name={icon} />{text}</TreeLink>
            </TreeRow>
          ))}
        </Tree>
        <Track>
          <Arrow viewBox="0 0 8 4"><path fill="#999" d="M4 0 8 4H0z" /></Arrow>
          <Thumb />
          <Arrow viewBox="0 0 8 4"><path fill="#444" d="M0 0h8L4 4z" /></Arrow>
        </Track>
      </NavBody>
    </Sidebar>
  );
}

function Suppliers() {
  return (
    <Panel>
      <PanelTitle>供应商管理</PanelTitle>
      <Toolbar>
        <Tools>
          <Tool type="button"><Icon name="plus" />添加</Tool>
          <Tool type="button"><Icon name="pencil" />修改</Tool>
          <Tool type="button"><Icon name="trash" />删除</Tool>
        </Tools>
        <SearchField>
          <SearchLabel>供应商名称：<SearchInput type="text" /></SearchLabel>
          <Tool type="button"><Icon name="search" />搜索</Tool>
        </SearchField>
      </Toolbar>
      <Grid>
        <Head>
          <Line>
            <HeadCell />
            {columns.map((c) => <HeadCell key={c} scope="col">{c}</HeadCell>)}
          </Line>
        </Head>
        <Body>
          {rows.map((r, i) => (
            <Line key={r[0]}>
              <NumberCell scope="row">{i + 1}</NumberCell>
              {r.map((v, j) => <Cell key={j}>{withQuotes(v)}</Cell>)}
            </Line>
          ))}
        </Body>
      </Grid>
      <Pager>
        <PageSize aria-label="page size" defaultValue="30"><option>10</option><option>20</option><option>30</option></PageSize>
        <Divider />
        <PageButton aria-label="first page"><Icon name="first" size={12} /></PageButton>
        <PageButton aria-label="previous page"><Icon name="prev" size={12} /></PageButton>
        <Divider />
        <PageJump>第<PageInput defaultValue="1" />共1页</PageJump>
        <Divider />
        <PageButton aria-label="next page"><Icon name="next" size={12} /></PageButton>
        <PageButton aria-label="last page"><Icon name="last" size={12} /></PageButton>
        <Divider />
        <PageButton aria-label="refresh" $strong><Icon name="refresh" size={12} /></PageButton>
        <Summary>显示1到10,共10记录</Summary>
      </Pager>
    </Panel>
  );
}

export default function App() {
  return (
    <Page>
      <GlobalStyle />
      <Browser />
      <Header />
      <Workspace>
        <SystemMenu />
        <Main>
          <TabStrip>
            {tabs.map(([icon, text], i) => (
              <Tab key={text} $active={i === tabs.length - 1}>
                <TabButton $closable={i > 0}><Icon name={icon} size={14} />{text}</TabButton>
                {i > 0 && (
                  <Close aria-label={`close ${text}`}><Glyph $size={8}><path strokeWidth="2" d="m2 2 12 12M14 2 2 14" /></Glyph></Close>
                )}
              </Tab>
            ))}
          </TabStrip>
          <Suppliers />
        </Main>
      </Workspace>
      <Watermark>@稀土掘金技术社区</Watermark>
    </Page>
  );
}
